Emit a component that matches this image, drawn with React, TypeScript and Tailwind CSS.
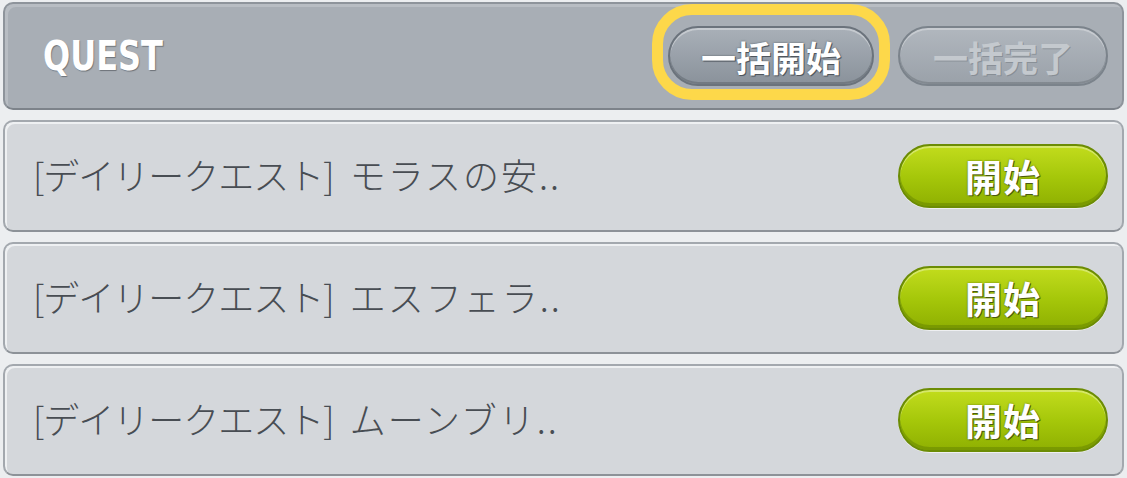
import React from "react";

const jp = { fontFamily: '"Noto Sans CJK JP", "Noto Sans", sans-serif' };

function GreenButton() {
  return (
    <div
      className="flex h-[64px] w-[210px] items-center justify-center rounded-full border-2 border-[#6c8c04] bg-gradient-to-b from-[#c2dc1c] via-[#a6c80a] to-[#8fb002] shadow-[inset_0_2px_0_rgba(255,255,255,0.35),inset_0_-3px_0_rgba(80,110,0,0.35),0_1px_0_rgba(255,255,255,0.6)]"
      style={jp}
    >
      <span className="text-[37px] font-bold leading-none tracking-[1px] text-white [text-shadow:1px_1px_0_#4a5a10,0_0_2px_rgba(60,70,10,0.7)]">
        開始
      </span>
    </div>
  );
}

function Row({ prefix, text }: { prefix: string; text: string }) {
  return (
    <div className="flex h-[112px] shrink-0 items-center justify-between rounded-[10px] border-2 border-[#a3a8ae] border-b-[#8d9298] bg-[#d4d7db] pl-[28px] pr-[14px] shadow-[inset_2px_2px_0_#eef0f2]">
      <span
        className="-mt-[4px] flex items-center text-[36px] leading-none text-[#484d53]"
        style={{ fontFamily: '"Noto Sans CJK JP", sans-serif', fontWeight: 300 }}
      >
        <span className="tracking-[-1px]">{prefix}</span>
        <span className="ml-[16px] tracking-[2px]">{text}</span>
      </span>
      <GreenButton />
    </div>
  );
}

export default function App() {
  return (
    <div className="flex h-[478px] w-[1127px] flex-col gap-[10px] overflow-hidden bg-[#eceef0] pl-[3px] pr-[3px] pt-[2px]">
      <div className="flex h-[108px] shrink-0 items-center justify-between rounded-[10px] border-2 border-[#8e949b] border-b-[#7d838a] bg-[#a8aeb5] pl-[38px] pr-[14px] shadow-[inset_3px_3px_0_#b8bdc3]">
        <span
          className="inline-block origin-left scale-x-[0.8] text-[40px] font-bold leading-none text-white [text-shadow:1px_1px_1px_rgba(70,75,80,0.6)]"
          style={{ fontFamily: '"DejaVu Sans", "Liberation Sans", sans-serif' }}
        >
          QUEST
        </span>
        <div className="flex items-center gap-[24px]">
          <div className="relative">
            <div className="pointer-events-none absolute -bottom-[14px] -left-[16px] -right-[16px] -top-[22px] rounded-[40px] border-[11px] border-[#fdd84a]" />
            <div
              className="relative flex h-[60px] w-[206px] items-center justify-center rounded-full border-2 border-[#6b737c] bg-gradient-to-b from-[#a9b0b8] to-[#8a929b] shadow-[inset_0_2px_0_rgba(255,255,255,0.35),inset_0_-2px_0_rgba(60,66,72,0.3)]"
              style={jp}
            >
              <span className="text-[35px] font-bold leading-none text-white [text-shadow:1px_1px_0_#4f565d,0_0_2px_rgba(50,55,60,0.7)]">
                一括開始
              </span>
            </div>
          </div>
          <div
            className="flex h-[60px] w-[210px] items-center justify-center rounded-full border-2 border-[#7b838b] bg-gradient-to-b from-[#b1b7be] to-[#9aa1a9] shadow-[inset_0_2px_0_rgba(255,255,255,0.3),inset_0_-2px_0_rgba(60,66,72,0.25)]"
            style={jp}
          >
            <span className="text-[35px] font-bold leading-none text-[#c4c9ce] [text-shadow:1px_1px_0_rgba(120,127,134,0.6)]">
              一括完了
            </span>
          </div>
        </div>
      </div>
      <Row prefix="[デイリークエスト]" text="モラスの安.." />
      <Row prefix="[デイリークエスト]" text="エスフェラ.." />
      <Row prefix="[デイリークエスト]" text="ムーンブリ.." />
    </div>
  );
}
